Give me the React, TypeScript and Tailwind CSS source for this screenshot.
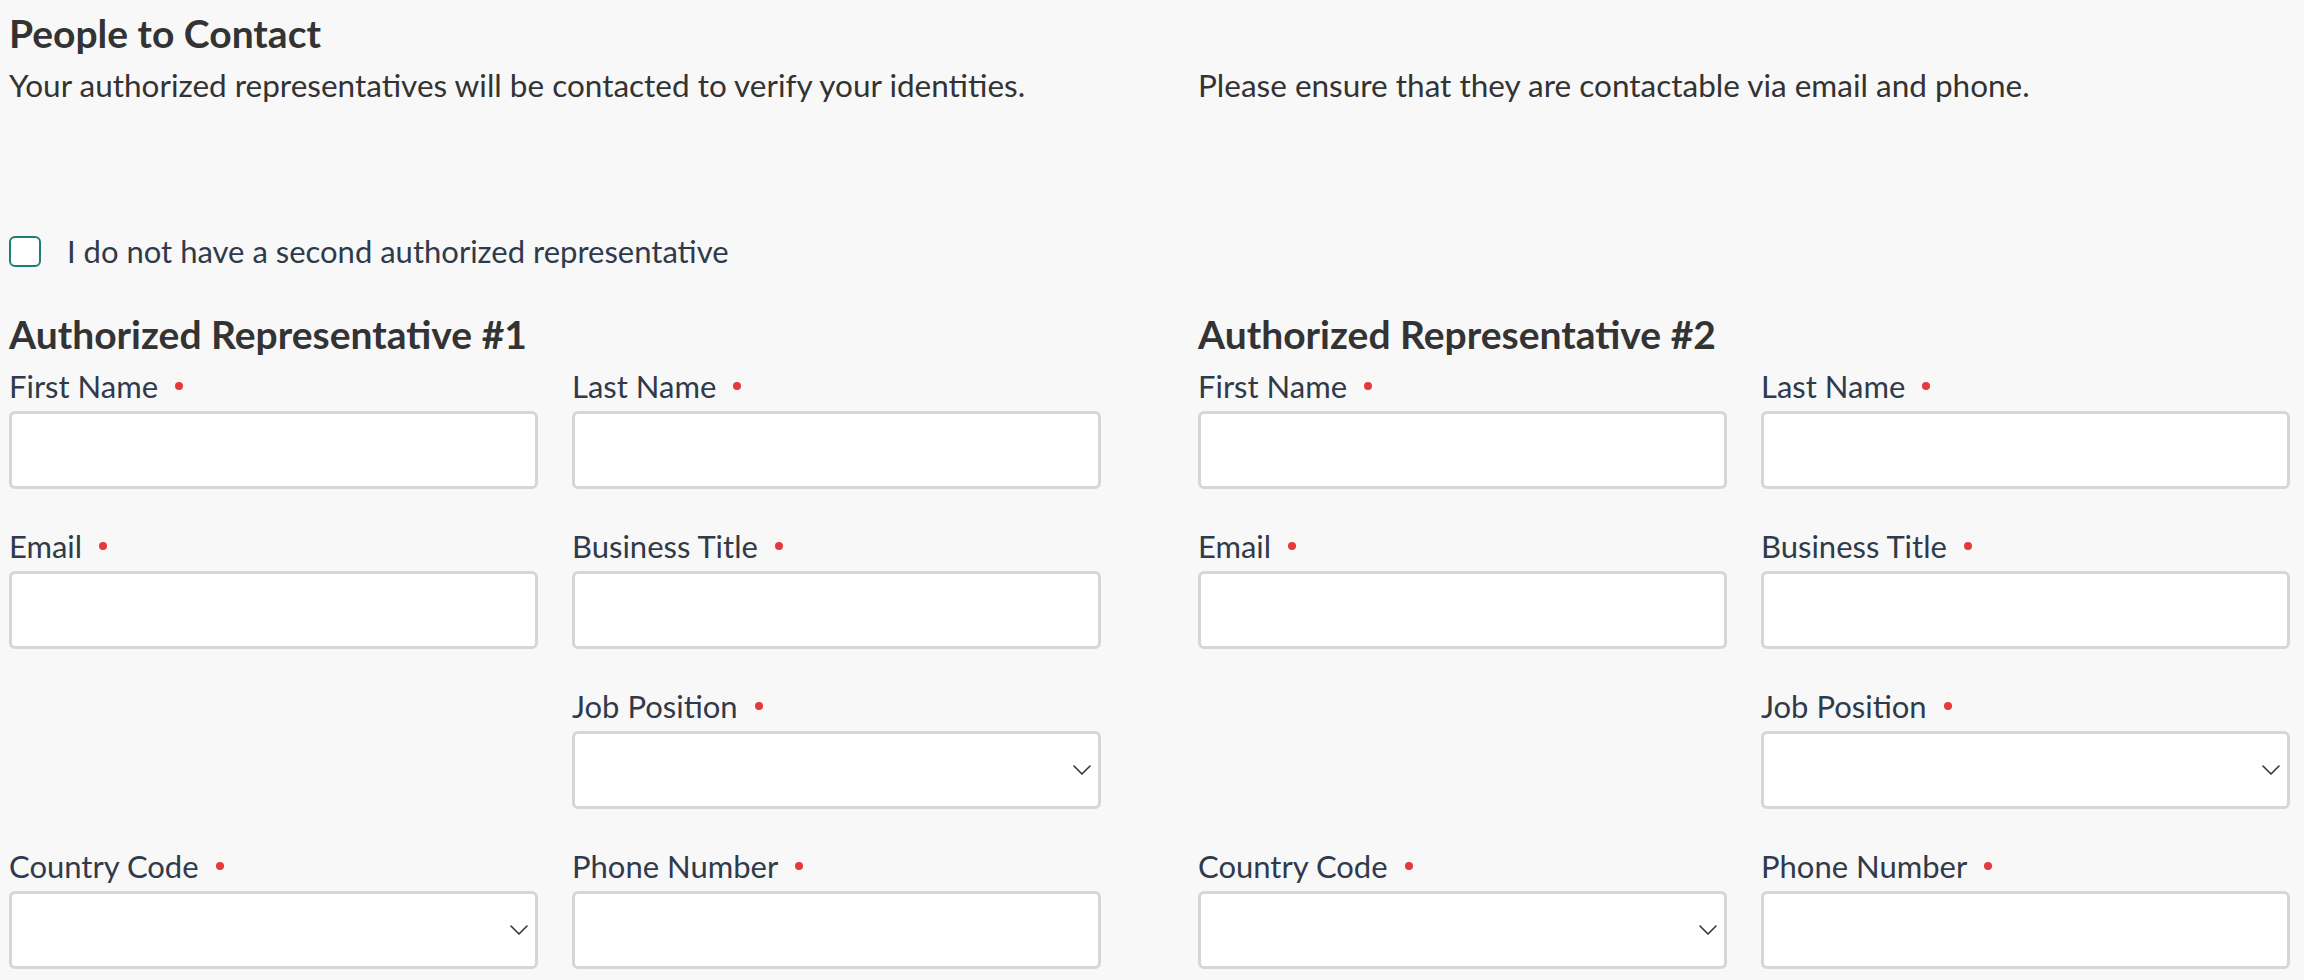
const FONT = "font-['Lato',_'Liberation_Sans',_sans-serif]";

type Field = { label: string; kind: "input" | "select" } | null;

const rows: Field[][] = [
    [
        { label: "First Name", kind: "input" },
        { label: "Last Name", kind: "input" },
    ],
    [
        { label: "Email", kind: "input" },
        { label: "Business Title", kind: "input" },
    ],
    [null, { label: "Job Position", kind: "select" }],
    [
        { label: "Country Code", kind: "select" },
        { label: "Phone Number", kind: "input" },
    ],
];

const Chevron = () => (
    <svg width="18" height="10" viewBox="0 0 18 10" fill="none">
        <path d="M1 1l8 8 8-8" stroke="#333333" strokeWidth="1.6" strokeLinecap="round" strokeLinejoin="round" />
    </svg>
);

const FormField = ({ field }: { field: Field }) => {
    if (!field) return <div />;
    return (
        <div className="flex flex-col">
            <label className="flex items-center h-[38px] text-[31px] leading-[38px] text-[#2f3a4a]">
                {field.label}
                <span className="ml-[17px] inline-block w-2 h-2 rounded-full bg-[#e5393b]" />
            </label>
            {field.kind === "input" ? (
                <input
                    type="text"
                    className="mt-[6px] h-[78px] w-full rounded-[6px] border-[3px] border-[#d6d6d6] bg-white px-3 text-[30px] outline-none"
                />
            ) : (
                <div className="mt-[6px] h-[78px] w-full rounded-[6px] border-[3px] border-[#d6d6d6] bg-white flex items-center justify-end pr-[7px]">
                    <Chevron />
                </div>
            )}
        </div>
    );
};

const Representative = ({ index }: { index: number }) => (
    <div className="flex flex-col">
        <h3 className="text-[39px] leading-[46px] font-bold text-[#333333]">Authorized Representative #{index}</h3>
        <div className="mt-[10px] grid grid-cols-2 gap-x-[34px] gap-y-[38px]">
            {rows.map((row, i) =>
                row.map((field, j) => <FormField key={`${i}-${j}`} field={field} />)
            )}
        </div>
    </div>
);

const App = () => {
    return (
        <div className={`${FONT} min-h-[980px] w-full bg-[#f8f8f8] pl-[9px] pt-[10px]`}>
            <div className="w-[2281px]">
                <h2 className="text-[39px] leading-[46px] font-bold text-[#333333]">People to Contact</h2>
                <div className="mt-[11px] grid grid-cols-[1092px_1092px] gap-x-[97px] text-[31.5px] leading-[36px] text-[#333333]">
                    <p>Your authorized representatives will be contacted to verify your identities.</p>
                    <p>Please ensure that they are contactable via email and phone.</p>
                </div>

                <label className="mt-[129px] flex items-center h-[38px] text-[31px] leading-[38px] text-[#2f3a4a]">
                    <span className="inline-block w-[32px] h-[31px] rounded-[6px] border-2 border-[#1f7c76] bg-white" />
                    <span className="ml-[26px]">I do not have a second authorized representative</span>
                </label>

                <div className="mt-[41px] grid grid-cols-[1092px_1092px] gap-x-[97px]">
                    <Representative index={1} />
                    <Representative index={2} />
                </div>
            </div>
        </div>
    );
};

export default App;
